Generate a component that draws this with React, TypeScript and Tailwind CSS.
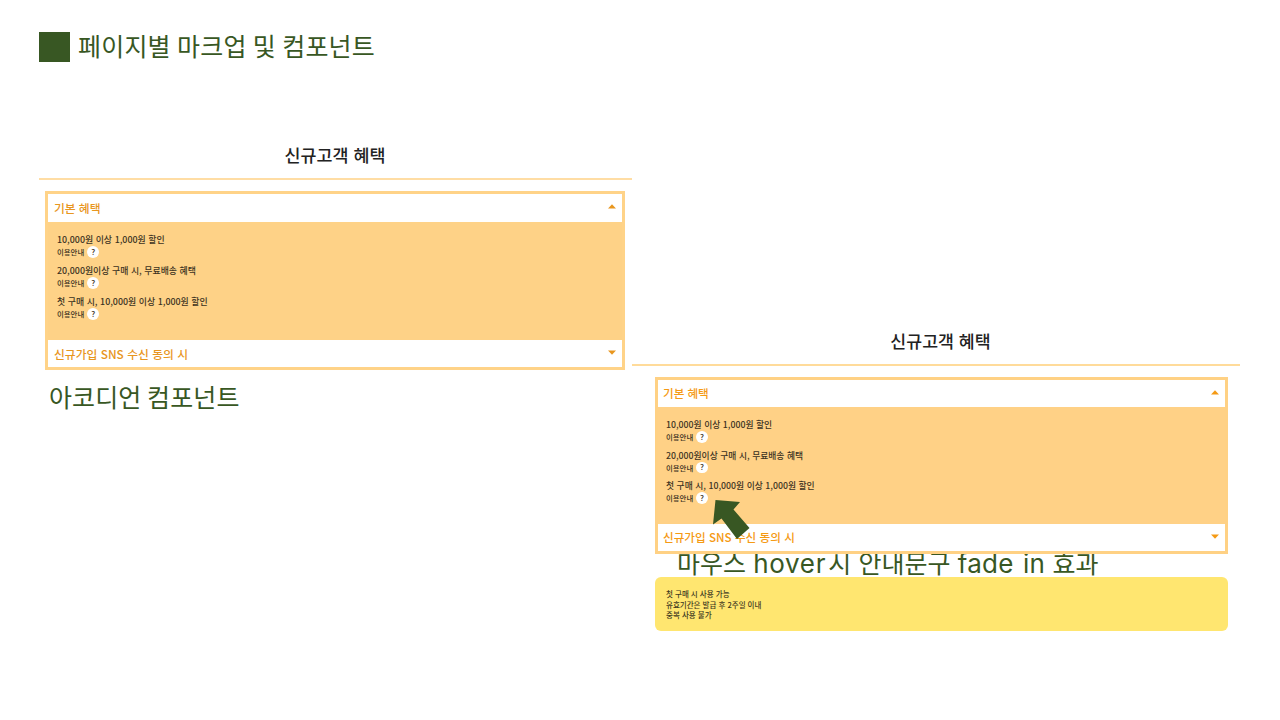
type Side = 'left' | 'right';

const benefits = [
  '10,000원 이상 1,000원 할인',
  '20,000원이상 구매 시, 무료배송 혜택',
  '첫 구매 시, 10,000원 이상 1,000원 할인',
];

function Caret({ up, color }: { up?: boolean; color: string }) {
  return (
    <svg width="8" height="5" viewBox="0 0 8 5" className="block">
      <path d={up ? 'M0 4.5 L4 0.3 L8 4.5 Z' : 'M0 0.5 L4 4.7 L8 0.5 Z'} fill={color} />
    </svg>
  );
}

function Accordion({ side }: { side: Side }) {
  const left = side === 'left';
  const color = left ? '#e8961e' : '#f59a14';
  const head = left
    ? 'flex items-center justify-between bg-white pl-[6px] pr-[6px] text-[11.8px] text-[#e8961e]'
    : 'flex items-center justify-between bg-white pl-[5.5px] pr-[5.5px] text-[11.6px] text-[#f59a14]';
  return (
    <div
      className={
        left
          ? 'flex h-[179px] w-[580px] flex-col border-[3px] border-[#ffd388] bg-[#fed287]'
          : 'flex h-[177px] w-[573px] flex-col border-[3px] border-[#ffd184] bg-[#ffd186]'
      }
    >
      <div className={head + (left ? ' h-[28px]' : ' h-[27px]')}>
        <span className="font-medium leading-none [word-spacing:0.5px]">기본 혜택</span>
        <div className="pb-[3px]">
          <Caret up color={color} />
        </div>
      </div>
      <div className={left ? 'h-[118px] pl-[9px] pt-[12px]' : 'h-[117px] pl-[8.5px] pt-[12px]'}>
        {benefits.map((b) => (
          <div key={b} className={left ? 'h-[30.8px] text-[#3c3222]' : 'h-[30.4px] text-[#3c3222]'}>
            <div
              className={
                left
                  ? 'flex h-[12px] items-center whitespace-nowrap text-[8.9px] font-medium [word-spacing:0.6px]'
                  : 'flex h-[12px] items-center whitespace-nowrap text-[8.75px] font-medium [word-spacing:0.6px]'
              }
            >
              {b}
            </div>
            <div className="flex h-[12px] items-center gap-[3px]">
              <span className="text-[7.4px] font-medium leading-none">이용안내</span>
              <span
                className={
                  left
                    ? 'flex size-[12px] items-center justify-center rounded-full bg-white text-[8px] font-medium leading-none'
                    : 'flex size-[11.5px] items-center justify-center rounded-full bg-white text-[8px] font-medium leading-none'
                }
              >
                ?
              </span>
            </div>
          </div>
        ))}
      </div>
      <div className={head + ' flex-1'}>
        <span className="pt-px font-medium leading-none [word-spacing:0.7px]">신규가입 SNS 수신 동의 시</span>
        <div className="pb-[2px]">
          <Caret color={color} />
        </div>
      </div>
    </div>
  );
}

export default function App() {
  return (
    <div className="h-[720px] w-[1280px] overflow-hidden bg-white pl-[39px] font-['Noto_Sans_CJK_KR',sans-serif]">
      <header className="flex h-[94px] items-center gap-[8px]">
        <div className="h-[30px] w-[31px] bg-[#385723]" />
        <h1 className="whitespace-nowrap pb-[4px] text-[25px] font-normal leading-none tracking-[0.2px] text-[#385723] [word-spacing:0.4px]">
          페이지별 마크업 및 컴포넌트
        </h1>
      </header>
      <main className="flex">
        <section className="w-[593px] pt-[38px]">
          <h2 className="flex h-[46px] items-center justify-center pr-px text-[17.4px] font-medium leading-none text-[#222] [word-spacing:1.2px]">
            신규고객 혜택
          </h2>
          <div className="h-[2px] bg-[#ffdda4]" />
          <div className="pl-[6px] pt-[11px]">
            <Accordion side="left" />
          </div>
          <p className="flex h-[53px] items-center pl-[10px] text-[25px] font-normal leading-none tracking-[0.1px] text-[#385723]">
            아코디언 컴포넌트
          </p>
        </section>
        <section className="w-[608px] pt-[224px]">
          <h2 className="flex h-[46px] items-center justify-center pl-[9px] text-[17.3px] font-medium leading-none text-[#222] [word-spacing:1px]">
            신규고객 혜택
          </h2>
          <div className="h-[2px] bg-[#ffdb9a]" />
          <div className="relative z-10 pl-[22.5px] pt-[11px]">
            <Accordion side="right" />
            <svg width="38" height="41" viewBox="0 0 38 41" className="absolute left-[80px] top-[133px]">
              <path d="M3.5 1 L28 3 L21.5 10.5 L37.5 29 L25 40 L9.5 19.5 L1 25.5 Z" fill="#385723" />
            </svg>
          </div>
          <div className="flex h-[22px] items-center pb-[3px] pl-[45px]">
            <p className="whitespace-pre text-[25px] font-normal leading-none text-[#385723] [word-spacing:1.6px]">
              마우스 <span className="font-['Inter'] text-[26px] tracking-[0.7px]">hover</span>
              <span className="pl-[2px]">시 안내문구</span>{' '}
              <span className="font-['Inter'] text-[26px] tracking-[0.3px]">fade in</span> 효과
            </p>
          </div>
          <div className="ml-[22.5px] mt-px flex h-[54px] w-[573px] flex-col rounded-[6px] bg-[#ffe670] pl-[11.5px] pt-[12px] text-[7.5px] font-medium leading-[10.5px] text-[#40391f] [word-spacing:0.4px]">
            <span>첫 구매 시 사용 가능</span>
            <span>유효기간은 발급 후 2주일 이내</span>
            <span>중복 사용 불가</span>
          </div>
        </section>
      </main>
    </div>
  );
}
